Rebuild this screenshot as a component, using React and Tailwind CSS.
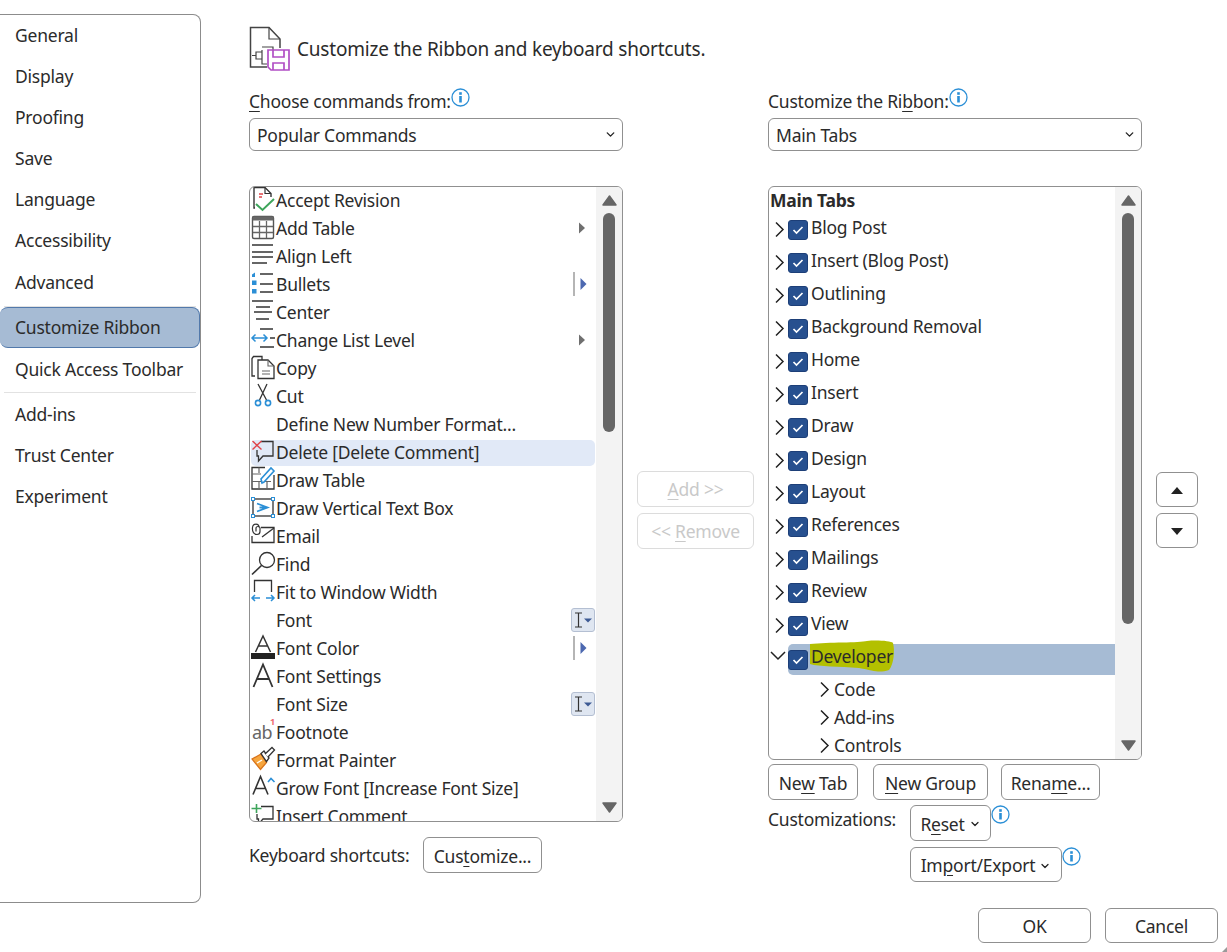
import { ChevronDown } from "lucide-react";

const ink = "#333333";
const blue = "#2b8fd6";

function Ico({ children, w = 26, h = 28 }) {
  return (
    <svg width={w} height={h} viewBox={`0 0 ${w} ${h}`} fill="none" className="shrink-0 overflow-visible">
      {children}
    </svg>
  );
}

function Lines({ items }) {
  return items.map(([x1, x2, y], i) => <path key={i} d={`M${x1} ${y}H${x2}`} stroke={ink} strokeWidth="1.5" />);
}

const icons = {
  accept: (
    <Ico>
      <path d="M5 22H4V1.5H15L21 7.5V11" stroke={ink} strokeWidth="1.4" />
      <path d="M15 1.5V7.5H21" stroke={ink} strokeWidth="1.2" />
      <path d="M9 8H13M9 11H12" stroke="#e0444a" strokeWidth="1.4" />
      <path d="M6 18L12.5 24L24 13" stroke="#3ea55b" strokeWidth="2" />
    </Ico>
  ),
  table: (
    <Ico>
      <rect x="2.5" y="2.5" width="21" height="22" rx="1.5" stroke="#555" strokeWidth="1.4" />
      <rect x="2.5" y="2.5" width="21" height="4" fill="#666" />
      <path d="M9.5 7V24M16.5 7V24M3 12.5H23M3 18.5H23" stroke="#666" strokeWidth="1.3" />
    </Ico>
  ),
  left: <Ico><Lines items={[[2, 23, 3], [2, 23, 10], [2, 23, 15], [2, 17, 21]]} /></Ico>,
  bullets: (
    <Ico>
      <Lines items={[[10, 23, 4], [10, 23, 14], [10, 23, 22]]} />
      <path d="M2 7V4.5L5 2.5V7Z" fill={blue} />
      <rect x="2" y="10.5" width="4.5" height="4.5" fill={blue} />
      <rect x="2" y="19" width="4.5" height="4.5" fill={blue} />
    </Ico>
  ),
  center: <Ico><Lines items={[[2, 23, 3], [6, 20, 9], [4, 22, 14], [6, 19, 21]]} /></Ico>,
  level: (
    <Ico>
      <Lines items={[[10, 23, 3], [20, 25, 12], [10, 24, 21]]} />
      <path d="M2 12H17M5.5 8.5L2 12L5.5 15.5M13.5 8.5L17 12L13.5 15.5" stroke={blue} strokeWidth="1.5" />
    </Ico>
  ),
  copy: (
    <Ico>
      <path d="M5 22H2V4.5L3.5 2.5H12V6" stroke={ink} strokeWidth="1.3" />
      <path d="M8 24.5V6H18L24 12V24.5Z" stroke={ink} strokeWidth="1.3" />
      <path d="M18 6V12H24M12 17H20M12 20H20" stroke="#666" strokeWidth="1.1" />
    </Ico>
  ),
  cut: (
    <Ico>
      <path d="M8 2L16.5 18M17 2L9.5 18" stroke={ink} strokeWidth="1.3" />
      <circle cx="8" cy="21" r="2.6" stroke={blue} strokeWidth="1.6" />
      <circle cx="18" cy="21" r="2.6" stroke={blue} strokeWidth="1.6" />
    </Ico>
  ),
  del: (
    <Ico>
      <path d="M11 3.5H23V18H13L8.5 23V18H7V12" stroke={ink} strokeWidth="1.3" />
      <path d="M2.5 3L11.5 11.5M11.5 3L2.5 11.5" stroke="#e0444a" strokeWidth="1.4" />
    </Ico>
  ),
  draw: (
    <Ico>
      <path d="M15 1.5H2V23H24V9" stroke={ink} strokeWidth="1.3" />
      <path d="M2 8H11M2 15.5H21M9 1.5V7M9 16V23M17 16V23" stroke="#666" strokeWidth="1.2" />
      <path d="M12 17L11 13L21 2L24 5L14 16Z" fill="#fff" stroke={blue} strokeWidth="1.6" />
    </Ico>
  ),
  vbox: (
    <Ico>
      <rect x="3" y="5" width="20" height="17" stroke={ink} strokeWidth="1.3" />
      <path d="M7 9.5L17.5 13.5L7 17.5M9.5 13.5H15" stroke={blue} strokeWidth="1.8" />
      {[[1.5, 3.5], [21.5, 3.5], [1.5, 20.5], [21.5, 20.5]].map(([x, y]) => (
        <rect key={x + "-" + y} x={x} y={y} width="3" height="3" fill="#fff" stroke={blue} />
      ))}
    </Ico>
  ),
  email: (
    <Ico>
      <path d="M11 5.5H24V20.5H2V14" stroke={ink} strokeWidth="1.3" />
      <path d="M12 15L24 6" stroke={ink} strokeWidth="1.3" />
      <path d="M9 5.5C9 1 3 1 2.5 5.5C2 10 4 12.5 7 12.5C9 12.5 10 11 10 9.5V6C10 4 6 4 6 6V9.5" stroke={ink} strokeWidth="1.2" />
    </Ico>
  ),
  find: (
    <Ico>
      <circle cx="17" cy="10" r="7.5" stroke={ink} strokeWidth="1.3" />
      <path d="M11.5 15.5L2 24.5" stroke={ink} strokeWidth="1.6" />
    </Ico>
  ),
  fit: (
    <Ico>
      <path d="M4.5 14V2.5H21.5V14" stroke={ink} strokeWidth="1.3" />
      <path d="M2 20H10M5 17L2 20L5 23M16 20H24M21 17L24 20L21 23" stroke={blue} strokeWidth="1.5" />
    </Ico>
  ),
  color: (
    <Ico>
      <path d="M5.5 18L13 2L20.5 18M8.5 12H17.5" stroke={ink} strokeWidth="1.5" />
      <rect x="1" y="19" width="24" height="6" fill="#222" />
    </Ico>
  ),
  settings: (
    <Ico>
      <path d="M3.5 25L13 2.5L22.5 25M7 17H19" stroke={ink} strokeWidth="1.8" />
    </Ico>
  ),
  foot: (
    <div className="w-[26px] h-[28px] shrink-0 relative">
      <span className="absolute left-[2px] top-[1px] text-[18px] tracking-[-0.5px] text-[#666]">ab</span>
      <span className="absolute left-[20px] top-[-3px] text-[9px] font-bold text-[#ee6a6f]">1</span>
    </div>
  ),
  painter: (
    <Ico>
      <path d="M2 13L11 8L16.5 16.5L10.5 23.5Z" fill="#f6a53d" stroke="#d9731a" strokeWidth="1.3" />
      <path d="M7 17L12 14" stroke="#fff" strokeWidth="1.4" />
      <path d="M11 7.5L14 5L19 12L16.5 15.5Z" fill="#fff" stroke={ink} strokeWidth="1.3" />
      <path d="M15 8L22 1.5L24.5 4L18 11" fill="#fff" stroke={ink} strokeWidth="1.3" />
    </Ico>
  ),
  grow: (
    <Ico>
      <path d="M3 20.5L10.5 2.5L18 20.5M5.5 14.5H15.5" stroke={ink} strokeWidth="1.6" />
      <path d="M18 8L21 4.5L24.5 8" stroke={blue} strokeWidth="1.6" />
    </Ico>
  ),
  insert: (
    <Ico>
      <path d="M11 4.5H23V17H13L8.5 22V17H7V12" stroke={ink} strokeWidth="1.3" />
      <path d="M1.5 6.5H11.5M6.5 2V11" stroke="#3ea55b" strokeWidth="1.6" />
    </Ico>
  ),
};

const arrowSide = (
  <svg width="8" height="12" viewBox="0 0 8 12" className="mr-[10px]">
    <path d="M1 0.5L7 6L1 11.5Z" fill="#6f6f6f" />
  </svg>
);

const splitSide = (
  <div className="flex items-center gap-[5px] mr-[9px]">
    <div className="w-[2px] h-[24px] bg-[#b5b5b5]" />
    <svg width="7" height="12" viewBox="0 0 7 12">
      <path d="M0.5 0L6.5 6L0.5 12Z" fill="#4c68b0" />
    </svg>
  </div>
);

const fontBox = (
  <div className="w-[24px] h-[24px] mr-[1px] rounded-[3px] border border-[#b4bfd2] bg-[#dfe6f1] flex items-center justify-center gap-px">
    <svg width="9" height="16" viewBox="0 0 9 16" fill="none">
      <path d="M1 1H8M1 15H8M4.5 1V15" stroke="#333" strokeWidth="1.2" />
    </svg>
    <svg width="8" height="5" viewBox="0 0 8 5">
      <path d="M0 0.5H8L4 4.5Z" fill="#3d5a94" />
    </svg>
  </div>
);

const commands = [
  ["Accept Revision", "accept"],
  ["Add Table", "table", arrowSide],
  ["Align Left", "left"],
  ["Bullets", "bullets", splitSide],
  ["Center", "center"],
  ["Change List Level", "level", arrowSide],
  ["Copy", "copy"],
  ["Cut", "cut"],
  ["Define New Number Format..."],
  ["Delete [Delete Comment]", "del"],
  ["Draw Table", "draw"],
  ["Draw Vertical Text Box", "vbox"],
  ["Email", "email"],
  ["Find", "find"],
  ["Fit to Window Width", "fit"],
  ["Font", null, fontBox],
  ["Font Color", "color", splitSide],
  ["Font Settings", "settings"],
  ["Font Size", null, fontBox],
  ["Footnote", "foot"],
  ["Format Painter", "painter"],
  ["Grow Font [Increase Font Size]", "grow"],
  ["Insert Comment", "insert"],
];

const tabs = [
  "Blog Post",
  "Insert (Blog Post)",
  "Outlining",
  "Background Removal",
  "Home",
  "Insert",
  "Draw",
  "Design",
  "Layout",
  "References",
  "Mailings",
  "Review",
  "View",
];

function Info() {
  return (
    <svg width="19" height="19" viewBox="0 0 19 19" fill="none" className="shrink-0">
      <circle cx="9.5" cy="9.5" r="8.5" stroke={blue} strokeWidth="1.3" />
      <rect x="8.2" y="8" width="2.6" height="6.5" fill={blue} />
      <rect x="8.2" y="4.2" width="2.6" height="2.6" fill={blue} />
    </svg>
  );
}

function Select({ label }) {
  return (
    <div className="h-[33px] border border-[#909090] rounded-[6px] flex items-center justify-between pl-[7px] pr-[5px]">
      <span className="mt-[2px]">{label}</span>
      <ChevronDown size={13} strokeWidth={2.5} color="#222" />
    </div>
  );
}

function Btn({ className, children }) {
  return (
    <div className={"flex items-center justify-center border border-[#909090] rounded-[6px] pt-[2px] " + className}>
      {children}
    </div>
  );
}

function ScrollBar({ thumb }) {
  return (
    <div className="w-[26px] shrink-0 bg-[#f3f3f3] flex flex-col items-center pt-[8px] pb-[8px]">
      <svg width="15" height="11" viewBox="0 0 15 11">
        <path d="M7.5 1L14 10H1Z" fill="#666" stroke="#666" strokeWidth="1.5" strokeLinejoin="round" />
      </svg>
      <div className={"w-[12px] mt-[7px] rounded-full bg-[#666] " + thumb} />
      <div className="flex-1" />
      <svg width="15" height="11" viewBox="0 0 15 11">
        <path d="M7.5 10L14 1H1Z" fill="#666" stroke="#666" strokeWidth="1.5" strokeLinejoin="round" />
      </svg>
    </div>
  );
}

function Check() {
  return (
    <div className="w-[20px] h-[20px] shrink-0 rounded-[3px] bg-[#27508f] border border-[#1d3f78] flex items-center justify-center">
      <svg width="12" height="10" viewBox="0 0 12 10" fill="none">
        <path d="M1.5 5L4.5 8L10.5 2" stroke="#fff" strokeWidth="1.7" />
      </svg>
    </div>
  );
}

function TreeChevron() {
  return (
    <svg width="11" height="17" viewBox="0 0 11 17" fill="none" className="shrink-0">
      <path d="M2 1.5L9 8.5L2 15.5" stroke="#222" strokeWidth="1.5" />
    </svg>
  );
}

function SideItem({ label, className = "" }) {
  return <div className={"h-[41px] pl-[15px] flex items-center " + className}>{label}</div>;
}

export default function App() {
  return (
    <div
      className="w-[1227px] h-[952px] bg-white overflow-hidden relative flex items-start text-[17.5px] tracking-[-0.22px] text-[#2b2b2b] whitespace-nowrap"
      style={{ fontFamily: "'Noto Sans', sans-serif" }}
    >
      {/* left nav */}
      <div className="w-[201px] h-[889px] mt-[14px] shrink-0 border border-l-0 border-[#8c8c8c] rounded-r-[8px]">
        {["General", "Display", "Proofing", "Save", "Language", "Accessibility"].map((s) => (
          <SideItem key={s} label={s} />
        ))}
        <SideItem label="Advanced" className="mt-[1px]" />
        <div className="h-px mx-[4px] mt-[3px] bg-[#e2e2e2]" />
        <div className="h-[41px] pl-[15px] flex items-center bg-[#a6bbd4] border border-l-0 border-[#5279ab] rounded-[8px]">
          Customize Ribbon
        </div>
        <SideItem label="Quick Access Toolbar" className="mt-px" />
        <div className="h-px mx-[4px] mt-[2px] mb-px bg-[#e2e2e2]" />
        {["Add-ins", "Trust Center", "Experiment"].map((s) => (
          <SideItem key={s} label={s} />
        ))}
      </div>

      <div className="flex-1 pl-[48px]">
        {/* heading */}
        <div className="h-[45px] mt-[26px] flex items-center gap-[7px]">
          <svg width="41" height="45" viewBox="0 0 41 45" fill="none" className="shrink-0">
            <path d="M31 22V13L20 1.5H1.5V41H18" stroke="#444" strokeWidth="1.5" />
            <path d="M20 1.5V13H31" stroke="#444" strokeWidth="1.2" />
            <path d="M13 26H7V33H13M13 21H24V26M13 33V38H18M7 29.5H3M13 24V36" stroke="#444" strokeWidth="1.2" />
            <path d="M19 24H40V44H22L19 41Z" fill="#fff" stroke="#b14fc5" strokeWidth="1.7" />
            <path d="M24 24V31H35V24M24 44V37H35V44" stroke="#b14fc5" strokeWidth="1.7" />
          </svg>
          <span className="text-[19px] tracking-[-0.2px] mt-[2px]">Customize the Ribbon and keyboard shortcuts.</span>
        </div>

        <div className="flex mt-[17px]">
          {/* commands column */}
          <div className="w-[374px] shrink-0">
            <div className="h-[30px] flex items-start">
              <span>
                <u className="underline-offset-[3px]">C</u>hoose commands from:
              </span>
              <Info />
            </div>
            <Select label="Popular Commands" />
            <div className="h-[636px] mt-[35px] border border-[#909090] rounded-[6px] flex overflow-hidden">
              <div className="flex-1 -mt-px">
                {commands.map(([label, icon, side]) =>
                  label.startsWith("Delete") ? (
                    <div key={label} className="h-[26px] mt-[2px] mx-px flex items-center bg-[#e1e9f7] rounded-[5px]">
                      <div className="flex items-center -ml-px -mt-[2px]">
                        {icons[icon]}
                        <span>{label}</span>
                      </div>
                    </div>
                  ) : (
                    <div key={label} className="h-[28px] flex items-center justify-between">
                      <div className="flex items-center">
                        {icon ? icons[icon] : <div className="w-[26px] shrink-0" />}
                        <span>{label}</span>
                      </div>
                      {side}
                    </div>
                  )
                )}
              </div>
              <ScrollBar thumb="h-[219px]" />
            </div>
            <div className="flex items-center mt-[15px]">
              <span className="w-[174px]">Keyboard shortcuts:</span>
              <Btn className="w-[119px] h-[36px]">
                <span>
                  Cus<u className="underline-offset-[3px]">t</u>omize...
                </span>
              </Btn>
            </div>
          </div>

          {/* add / remove */}
          <div className="w-[145px] shrink-0 pl-[14px] pt-[383px]">
            <div className="w-[117px] h-[36px] flex items-center justify-center border border-[#dcdcdc] rounded-[6px] text-[#c9c9c9]">
              <span>
                <u className="underline-offset-[3px]">A</u>dd &gt;&gt;
              </span>
            </div>
            <div className="w-[117px] h-[36px] mt-[6px] flex items-center justify-center border border-[#dcdcdc] rounded-[6px] text-[#c9c9c9]">
              <span>
                &lt;&lt; <u className="underline-offset-[3px]">R</u>emove
              </span>
            </div>
          </div>

          {/* ribbon column */}
          <div className="w-[374px] shrink-0">
            <div className="h-[30px] flex items-start">
              <span>
                Customize the Ri<u className="underline-offset-[3px]">b</u>bon:
              </span>
              <Info />
            </div>
            <Select label="Main Tabs" />
            <div className="h-[574px] mt-[35px] border border-[#909090] rounded-[6px] flex overflow-hidden">
              <div className="flex-1 min-w-0 -mt-px">
                <div className="h-[25px] pl-px pt-[4px] flex items-center font-bold">Main Tabs</div>
                {tabs.map((t) => (
                  <div key={t} className="h-[33px] flex items-center">
                    <div className="ml-[5px] mr-[3px] mt-[3px] flex">
                      <TreeChevron />
                    </div>
                    <div className="mt-[5px]">
                      <Check />
                    </div>
                    <span className="ml-[3px]">{t}</span>
                  </div>
                ))}
                <div className="h-[33px] flex items-start">
                  <svg width="16" height="17" viewBox="0 0 16 17" fill="none" className="ml-px mr-[2px] mt-[7px] shrink-0">
                    <path d="M1 5L8 12L15 5" stroke="#222" strokeWidth="1.5" />
                  </svg>
                  <div className="flex-1 h-[31px] mt-[4px] flex items-center bg-[#a6bbd4] rounded-l-[5px]">
                    <Check />
                    <span className="relative ml-[3px] -mt-[7px]">
                      <svg width="86" height="33" viewBox="0 0 86 33" className="absolute left-[-2px] top-[-3px] overflow-visible">
                        <path
                          d="M1 4C20 2 50 3 58 1C68 0 82 1 84 3C86 10 85 24 80 30C70 33 66 31 50 28C30 26 10 27 1 24Z"
                          fill="#b3c000"
                        />
                      </svg>
                      <span className="relative">Developer</span>
                    </span>
                  </div>
                </div>
                <div className="pt-[2px]">
                  {["Code", "Add-ins", "Controls"].map((t) => (
                    <div key={t} className="h-[28px] flex items-center pl-[50px]">
                      <TreeChevron />
                      <span className="ml-[4px]">{t}</span>
                    </div>
                  ))}
                </div>
              </div>
              <ScrollBar thumb="h-[411px]" />
            </div>
            <div className="flex mt-[4px]">
              <Btn className="w-[90px] h-[36px]">
                <span>
                  Ne<u className="underline-offset-[3px]">w</u> Tab
                </span>
              </Btn>
              <Btn className="w-[115px] h-[36px] ml-[15px]">
                <span>
                  <u className="underline-offset-[3px]">N</u>ew Group
                </span>
              </Btn>
              <Btn className="w-[99px] h-[36px] ml-[13px]">
                <span>
                  Rena<u className="underline-offset-[3px]">m</u>e...
                </span>
              </Btn>
            </div>
            <div className="flex items-start mt-[5px]">
              <span className="w-[142px] mt-px">Customizations:</span>
              <Btn className="w-[81px] h-[36px]">
                <span>
                  R<u className="underline-offset-[3px]">e</u>set
                </span>
                <ChevronDown size={12} strokeWidth={2.5} color="#222" className="ml-[4px]" />
              </Btn>
              <Info />
            </div>
            <div className="flex items-start mt-[6px] pl-[142px]">
              <Btn className="w-[152px] h-[35px]">
                <span>
                  Im<u className="underline-offset-[3px]">p</u>ort/Export
                </span>
                <ChevronDown size={12} strokeWidth={2.5} color="#222" className="ml-[4px]" />
              </Btn>
              <Info />
            </div>
          </div>

          {/* move up / down */}
          <div className="pl-[14px] pt-[384px] shrink-0">
            <Btn className="w-[42px] h-[35px]">
              <svg width="12" height="7" viewBox="0 0 12 7">
                <path d="M6 0L12 7H0Z" fill="#222" />
              </svg>
            </Btn>
            <Btn className="w-[42px] h-[35px] mt-[6px]">
              <svg width="12" height="7" viewBox="0 0 12 7">
                <path d="M6 7L12 0H0Z" fill="#222" />
              </svg>
            </Btn>
          </div>
        </div>

        <div className="flex justify-end gap-[14px] mt-[26px] pr-[9px]">
          <Btn className="w-[113px] h-[35px]">OK</Btn>
          <Btn className="w-[113px] h-[35px]">Cancel</Btn>
        </div>
      </div>

      {/* resize grip */}
      <svg width="5" height="5" viewBox="0 0 5 5" className="absolute right-0 bottom-0">
        <path d="M5 0V5H0Z" fill="#9a9a9a" />
      </svg>
    </div>
  );
}
